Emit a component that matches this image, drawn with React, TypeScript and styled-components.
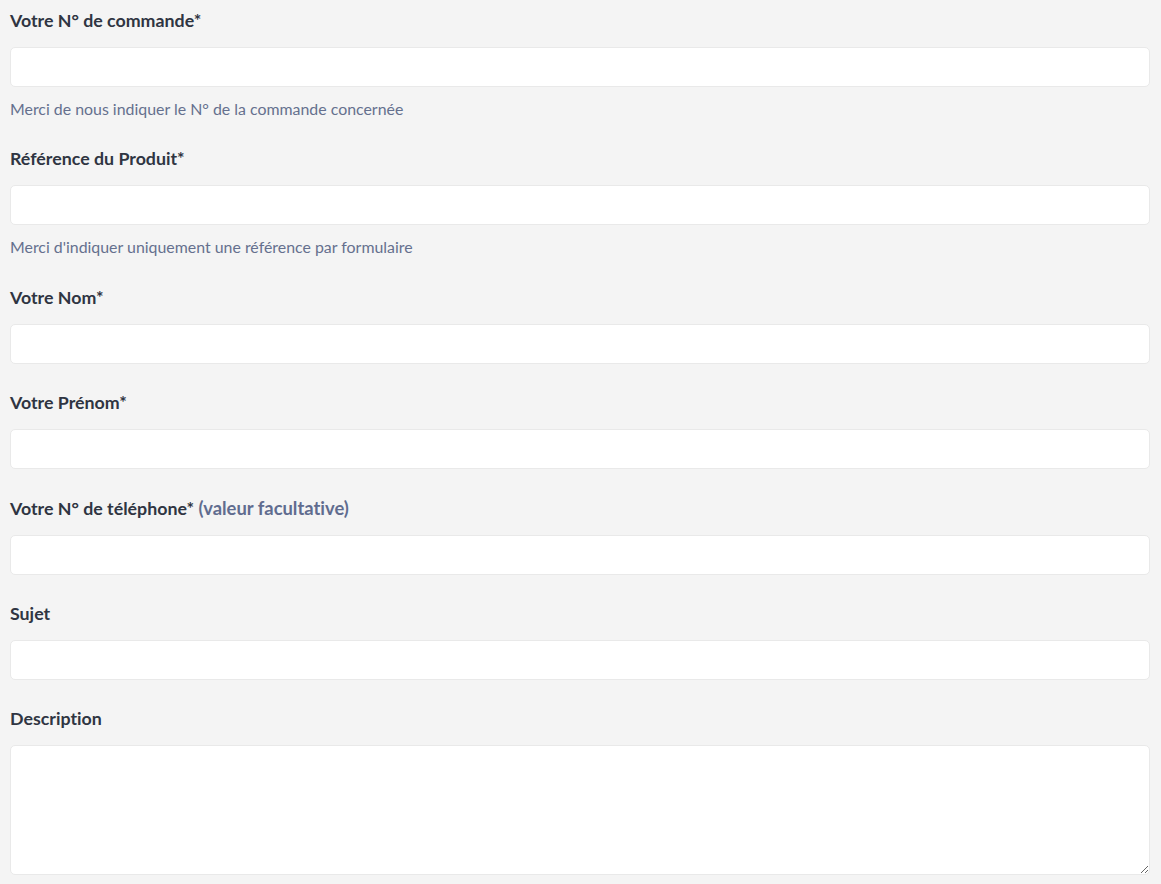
import React from 'react'
import styled, { createGlobalStyle } from 'styled-components'

const GlobalStyle = createGlobalStyle`
  html, body {
    margin: 0;
    padding: 0;
    background: #f4f4f4;
  }
  body {
    font-family: Lato, 'Noto Sans', sans-serif;
    font-variant-ligatures: none;
  }
`

const Form = styled.form`
  display: flex;
  flex-direction: column;
  padding: 7px 11px 0 10px;
`

const Field = styled.div`
  display: flex;
  flex-direction: column;
  margin-bottom: 25.4px;
`

const Label = styled.label`
  font-size: 17.8px;
  font-weight: 700;
  line-height: 26px;
  color: #2f3542;
  margin-bottom: 14px;
`

const Optional = styled.span`
  font-size: 18.4px;
  color: #606c8f;
`

const Input = styled.input`
  box-sizing: border-box;
  height: 40px;
  width: 100%;
  background: #fff;
  border: 1px solid #e9e9e9;
  border-radius: 5px;
  padding: 0 12px;
  font-family: inherit;
  font-size: 15px;
  outline: none;
`

const TextArea = styled.textarea`
  box-sizing: border-box;
  height: 130px;
  width: 100%;
  background: #fff;
  border: 1px solid #e9e9e9;
  border-radius: 5px;
  padding: 10px 12px;
  font-family: inherit;
  font-size: 15px;
  outline: none;
  display: block;
`

const Hint = styled.small`
  font-size: 15.9px;
  line-height: 22px;
  color: #65708e;
  margin-top: 11px;
`

interface FieldProps {
  id: string
  label: string
  required?: boolean
  optional?: string
  hint?: string
}

const TextField: React.FC<FieldProps> = ({ id, label, required, optional, hint }) => (
  <Field>
    <Label htmlFor={id}>
      {label}
      {required && '*'}
      {optional && <Optional> {optional}</Optional>}
    </Label>
    <Input id={id} type="text" />
    {hint && <Hint>{hint}</Hint>}
  </Field>
)

export default function App() {
  return (
    <>
      <GlobalStyle />
      <Form>
        <TextField
          id="order"
          label="Votre N° de commande"
          required
          hint="Merci de nous indiquer le N° de la commande concernée"
        />
        <TextField
          id="ref"
          label="Référence du Produit"
          required
          hint="Merci d'indiquer uniquement une référence par formulaire"
        />
        <TextField id="name" label="Votre Nom" required />
        <TextField id="firstname" label="Votre Prénom" required />
        <TextField id="phone" label="Votre N° de téléphone" required optional="(valeur facultative)" />
        <TextField id="subject" label="Sujet" />
        <Field>
          <Label htmlFor="description">Description</Label>
          <TextArea id="description" />
        </Field>
      </Form>
    </>
  )
}
